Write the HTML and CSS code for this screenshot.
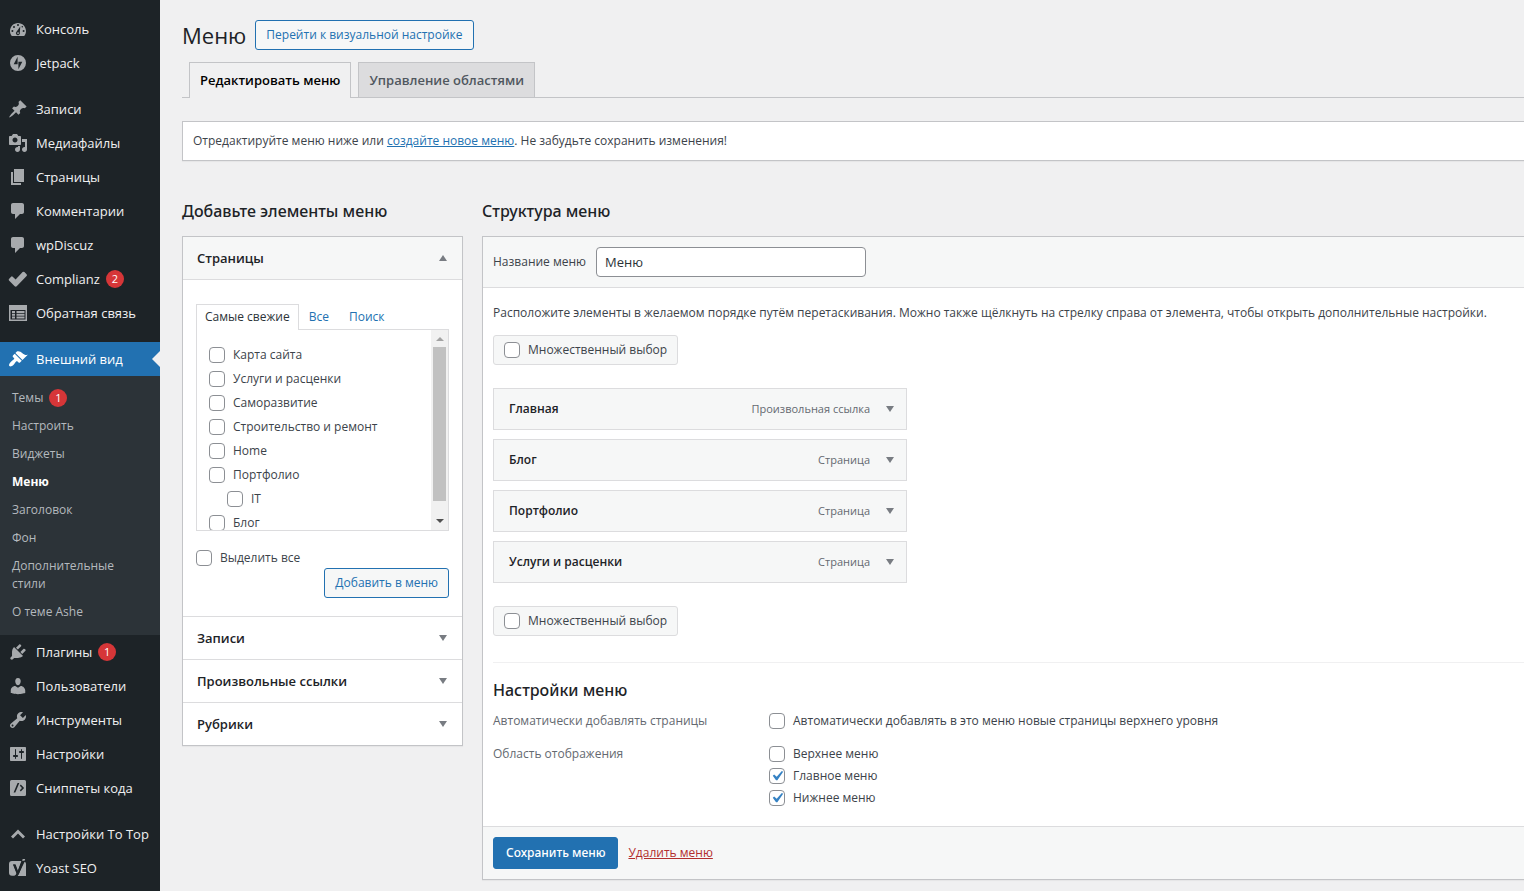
FILE: index.html
```html
<!DOCTYPE html>
<html lang="ru">
<head>
<meta charset="utf-8">
<meta name="viewport" content="width=device-width, initial-scale=1">
<title>Меню</title>
<link rel="stylesheet" href="styles.css">
</head>
<body>
<div class="layout">
  <nav class="sidebar" aria-label="Главное меню">
    <ul class="nav">
      <li><a class="nav-link" href="#"><svg class="icon" viewBox="0 0 20 20"><path fill-rule="evenodd" d="M3.8 17h12.400C17.300 15.600 18 13.900 18 12c0-4.400-3.600-8-8-8s-8 3.600-8 8c0 1.900.7 3.600 1.800 5zM9 6a1 1 0 1 1 2 0 1 1 0 0 1-2 0zM5 8a1 1 0 1 1 2 0 1 1 0 0 1-2 0zM13.500 7.700a.8.8 0 1 1 1.600 0 .8.8 0 0 1-1.600 0zM3.400 12a1 1 0 1 1 2 0 1 1 0 0 1-2 0zM14.600 12a1 1 0 1 1 2 0 1 1 0 0 1-2 0zM12.300 7.400L11.800 13.500a2 2 0 1 1-3.300-.8zM10 13.200a.9.9 0 1 0 .1 0z"/></svg>Консоль</a></li>
      <li><a class="nav-link" href="#"><svg class="icon" viewBox="0 0 20 20"><path fill-rule="evenodd" d="M10 2a8 8 0 1 0 0 16 8 8 0 0 0 0-16zM9.600 11.300H5.700l3.900-7.600zM10.400 16.300V8.700h3.900z"/></svg>Jetpack</a></li>
      <li class="nav-gap"><a class="nav-link" href="#"><svg class="icon" viewBox="0 0 20 20"><path d="M10.440 3.020l1.820-1.820 6.360 6.350-1.830 1.820c-1.050-.68-2.480-.57-3.410.36l-.75.75c-.92.93-1.040 2.350-.35 3.410l-1.830 1.820-2.410-2.410-2.800 2.790c-.42.42-3.380 2.710-3.800 2.290s1.860-3.390 2.280-3.810l2.790-2.790L4.100 9.360l1.830-1.820c1.050.69 2.480.57 3.400-.36l.75-.75c.93-.92 1.050-2.350.36-3.410z"/></svg>Записи</a></li>
      <li><a class="nav-link" href="#"><svg class="icon" viewBox="0 0 20 20"><path fill-rule="evenodd" d="M13 11V4c0-.55-.45-1-1-1h-1.670L9 1H5L3.670 3H2c-.55 0-1 .45-1 1v7c0 .55.45 1 1 1h10c.55 0 1-.45 1-1zM7 4.500c1.380 0 2.500 1.120 2.500 2.500S8.380 9.500 7 9.500 4.500 8.380 4.500 7 5.620 4.500 7 4.500zM14 6h5v10.500c0 1.380-1.120 2.500-2.500 2.500S14 17.880 14 16.500s1.120-2.500 2.500-2.500c.17 0 .34.020.5.050V9h-3V6zm-4 8.050V13h2v3.500c0 1.380-1.120 2.500-2.500 2.500S7 17.880 7 16.500 8.120 14 9.500 14c.17 0 .34.020.5.050z"/></svg>Медиафайлы</a></li>
      <li><a class="nav-link" href="#"><svg class="icon" viewBox="0 0 20 20"><path d="M6 15V2h10v13H6zm-1 1h8v2H3V5h2v11z"/></svg>Страницы</a></li>
      <li><a class="nav-link" href="#"><svg class="icon" viewBox="0 0 20 20"><path d="M5 2h9c1.100 0 2 .9 2 2v7c0 1.100-.9 2-2 2h-2l-5 5v-5H5c-1.100 0-2-.9-2-2V4c0-1.100.9-2 2-2z"/></svg>Комментарии</a></li>
      <li><a class="nav-link" href="#"><svg class="icon" viewBox="0 0 20 20"><path d="M5 2h9c1.100 0 2 .9 2 2v7c0 1.100-.9 2-2 2h-2l-5 5v-5H5c-1.100 0-2-.9-2-2V4c0-1.100.9-2 2-2z"/></svg>wpDiscuz</a></li>
      <li><a class="nav-link" href="#"><svg class="icon" viewBox="0 0 20 20"><path d="M1 9.900l2.100-2.200q.8-.7 1.600 0l2.900 2.700 7-7.300q.9-.8 1.800 0l2.200 2.100q.8.900 0 1.800L8.700 17.300q-1 .8-2 0L1 11.600q-.7-.9 0-1.700z"/></svg>Complianz<span class="badge">2</span></a></li>
      <li><a class="nav-link" href="#"><svg class="icon" viewBox="0 0 20 20"><path fill-rule="evenodd" d="M1 2h18v16H1zM2.500 7v9.500h15V7zM4 8h3v2H4zM8.500 8h8v2h-8zM4 10.800h3v2H4zM8.500 10.800h8v2h-8zM4 13.600h3v2H4zM8.500 13.600h8v2h-8z"/></svg>Обратная связь</a></li>
      <li class="nav-gap">
        <a class="nav-link nav-link-current" href="#"><svg class="icon" viewBox="0 0 20 20"><path d="M14.480 11.060L7.410 3.990l1.500-1.500c.5-.56 2.300-.47 3.510.32 1.210.8 1.430 1.280 2.910 2.100 1.180.64 2.450 1.260 4.450.85zm-.71.71L6.700 4.700 4.930 6.470c-.39.39-.39 1.020 0 1.410l1.060 1.060c.39.39.39 1.030 0 1.420-.6.6-1.430 1.110-2.210 1.690-.35.26-.7.53-1.010.84C1.430 14.230.4 16.080 1.400 17.070c.99 1 2.840-.03 4.180-1.360.31-.31.58-.66.85-1.020.57-.78 1.080-1.610 1.690-2.210.39-.39 1.020-.39 1.410 0l1.060 1.060c.39.39 1.020.39 1.410 0z"/></svg>Внешний вид</a>
        <ul class="subnav">
          <li><a href="#">Темы<span class="badge">1</span></a></li>
          <li><a href="#">Настроить</a></li>
          <li><a href="#">Виджеты</a></li>
          <li><a class="subnav-current" href="#">Меню</a></li>
          <li><a href="#">Заголовок</a></li>
          <li><a href="#">Фон</a></li>
          <li><a href="#">Дополнительные<br>стили</a></li>
          <li><a href="#">О теме Ashe</a></li>
        </ul>
      </li>
      <li><a class="nav-link" href="#"><svg class="icon" viewBox="0 0 20 20"><path d="M13.110 4.360L9.870 7.600 8 5.730l3.240-3.240c.35-.34 1.050-.2 1.560.32.52.51.66 1.210.31 1.550zm-8 1.770l.91-1.120 9.010 9.010-1.190.84c-.71.71-2.630 1.160-3.820 1.160H6.140L4.900 17.260c-.59.59-1.540.59-2.120 0-.59-.58-.59-1.530 0-2.120l1.240-1.240v-3.880c0-1.130.4-3.190 1.090-3.890zm7.260 3.970l3.240-3.240c.34-.35 1.040-.21 1.550.31.52.51.66 1.210.31 1.550l-3.240 3.250z"/></svg>Плагины<span class="badge">1</span></a></li>
      <li><a class="nav-link" href="#"><svg class="icon" viewBox="0 0 20 20"><path d="M10 9.250c-2.270 0-2.730-3.440-2.730-3.440C7 4.020 7.820 2 9.970 2c2.160 0 2.980 2.020 2.710 3.810 0 0-.41 3.440-2.680 3.440zm0 2.570L12.720 10c2.390 0 4.520 2.330 4.520 4.530v2.490s-3.650 1.130-7.240 1.130c-3.650 0-7.240-1.130-7.240-1.130v-2.490c0-2.250 1.940-4.480 4.470-4.480z"/></svg>Пользователи</a></li>
      <li><a class="nav-link" href="#"><svg class="icon" viewBox="0 0 20 20"><path fill-rule="evenodd" d="M16.680 9.770c-1.340 1.340-3.300 1.670-4.950.99l-5.410 6.520c-.99.99-2.590.99-3.580 0s-.99-2.590 0-3.570l6.520-5.420c-.68-1.650-.35-3.610.99-4.950 1.280-1.280 3.120-1.620 4.720-1.060l-2.890 2.890 2.820 2.820 2.860-2.870c.53 1.580.18 3.390-1.080 4.650zM3.810 16.210c.4.39 1.040.39 1.430 0 .4-.4.4-1.040 0-1.430-.39-.4-1.030-.4-1.430 0-.39.39-.39 1.030 0 1.430z"/></svg>Инструменты</a></li>
      <li><a class="nav-link" href="#"><svg class="icon" viewBox="0 0 20 20"><path fill-rule="evenodd" d="M18 16V4c0-.55-.45-1-1-1H3c-.55 0-1 .45-1 1v12c0 .55.45 1 1 1h14c.55 0 1-.45 1-1zM8 11h1c.55 0 1 .45 1 1s-.45 1-1 1H8v1.500c0 .28-.22.5-.5.5s-.5-.22-.5-.5V13H6c-.55 0-1-.45-1-1s.45-1 1-1h1V5.500c0-.28.22-.5.5-.5s.5.22.5.5V11zm5-2h-1c-.55 0-1-.45-1-1s.45-1 1-1h1V5.500c0-.28.22-.5.5-.5s.5.22.5.5V7h1c.55 0 1 .45 1 1s-.45 1-1 1h-1v5.500c0 .28-.22.5-.5.5s-.5-.22-.5-.5V9z"/></svg>Настройки</a></li>
      <li><a class="nav-link" href="#"><svg class="icon" viewBox="0 0 20 20"><path fill-rule="evenodd" d="M3.500 2h13A1.500 1.500 0 0 1 18 3.500v13a1.500 1.500 0 0 1-1.500 1.500h-13A1.500 1.500 0 0 1 2 16.500v-13A1.500 1.500 0 0 1 3.500 2zM9.600 5l-4 9.500h1.700l4-9.500zM11.800 7.700l2.200 2.300-2.200 2.300 1 1.200 3.300-3.500-3.300-3.500z"/></svg>Сниппеты кода</a></li>
      <li class="nav-gap"><a class="nav-link" href="#"><svg class="icon" viewBox="0 0 20 20"><path d="M10 5.500l7 7-2 2-5-5-5 5-2-2z"/></svg>Настройки To Top</a></li>
      <li><a class="nav-link" href="#"><svg class="icon" viewBox="0 0 20 20"><path d="M4 3h9.800L9.900 13 7.600 6.500H5l3.500 8.700c-.5 1.700-1.400 2.600-2.800 2.600H4a3 3 0 0 1-3-3V6a3 3 0 0 1 3-3zM16.600 3.800C17.800 4.300 18 5.200 18 6.200V18H8.700c1.300-.7 2.100-2 2.800-3.800z"/><path d="M14.200 1h2.600L11 15.800C10 18.300 8.600 19.400 6 19.500v-1.600c1.400-.2 2.100-.9 2.700-2.500L5.200 6.600h2L9.700 13z" class="icon-dark"/><path d="M14.700 1h2.500l-.7 1.700h-2.400z"/></svg>Yoast SEO</a></li>
    </ul>
  </nav>

  <main class="main">
    <header class="page-head">
      <h1>Меню</h1>
      <a class="button" href="#">Перейти к визуальной настройке</a>
    </header>
    <nav class="tabs" aria-label="Разделы">
      <a class="tab tab-active" href="#">Редактировать меню</a>
      <a class="tab" href="#">Управление областями</a>
    </nav>
    <p class="notice">Отредактируйте меню ниже или <a href="#">создайте новое меню</a>. Не забудьте сохранить изменения!</p>

    <div class="columns">
      <section class="items">
        <h2>Добавьте элементы меню</h2>
        <div class="accordion">
          <button class="acc-head acc-head-open" type="button" aria-expanded="true">Страницы<svg class="arrow" viewBox="0 0 8 6"><path d="M0 6L4 0l4 6z"/></svg></button>
          <div class="acc-body">
            <div class="subtabs">
              <a class="subtab subtab-active" href="#">Самые свежие</a>
              <a class="subtab" href="#">Все</a>
              <a class="subtab" href="#">Поиск</a>
            </div>
            <div class="picker">
              <ul class="picker-list">
                <li><label class="check"><input type="checkbox">Карта сайта</label></li>
                <li><label class="check"><input type="checkbox">Услуги и расценки</label></li>
                <li><label class="check"><input type="checkbox">Саморазвитие</label></li>
                <li><label class="check"><input type="checkbox">Строительство и ремонт</label></li>
                <li><label class="check"><input type="checkbox">Home</label></li>
                <li><label class="check"><input type="checkbox">Портфолио</label></li>
                <li class="picker-child"><label class="check"><input type="checkbox">IT</label></li>
                <li><label class="check"><input type="checkbox">Блог</label></li>
              </ul>
              <div class="scrollbar" aria-hidden="true">
                <svg class="scroll-arrow scroll-arrow-off" viewBox="0 0 17 17"><path d="M5 11l4-4 4 4z"/></svg>
                <div class="scroll-thumb"></div>
                <svg class="scroll-arrow" viewBox="0 0 17 17"><path d="M5 6h8l-4 4z"/></svg>
              </div>
            </div>
            <label class="check"><input type="checkbox">Выделить все</label>
            <div class="acc-actions"><button class="button" type="button">Добавить в меню</button></div>
          </div>
          <button class="acc-head" type="button" aria-expanded="false">Записи<svg class="arrow" viewBox="0 0 8 6"><path d="M0 0h8L4 6z"/></svg></button>
          <button class="acc-head" type="button" aria-expanded="false">Произвольные ссылки<svg class="arrow" viewBox="0 0 8 6"><path d="M0 0h8L4 6z"/></svg></button>
          <button class="acc-head" type="button" aria-expanded="false">Рубрики<svg class="arrow" viewBox="0 0 8 6"><path d="M0 0h8L4 6z"/></svg></button>
        </div>
      </section>

      <section class="structure">
        <h2>Структура меню</h2>
        <form class="panel">
          <div class="panel-head">
            <label for="menu-name">Название меню</label>
            <input class="text-input" id="menu-name" type="text" value="Меню">
          </div>
          <div class="panel-body">
            <p class="hint">Расположите элементы в желаемом порядке путём перетаскивания. Можно также щёлкнуть на стрелку справа от элемента, чтобы открыть дополнительные настройки.</p>
            <label class="check bulk"><input type="checkbox">Множественный выбор</label>
            <ul class="menu-items">
              <li class="menu-item"><span class="item-title">Главная</span><span class="item-type">Произвольная ссылка</span><svg class="arrow" viewBox="0 0 8 6"><path d="M0 0h8L4 6z"/></svg></li>
              <li class="menu-item"><span class="item-title">Блог</span><span class="item-type">Страница</span><svg class="arrow" viewBox="0 0 8 6"><path d="M0 0h8L4 6z"/></svg></li>
              <li class="menu-item"><span class="item-title">Портфолио</span><span class="item-type">Страница</span><svg class="arrow" viewBox="0 0 8 6"><path d="M0 0h8L4 6z"/></svg></li>
              <li class="menu-item"><span class="item-title">Услуги и расценки</span><span class="item-type">Страница</span><svg class="arrow" viewBox="0 0 8 6"><path d="M0 0h8L4 6z"/></svg></li>
            </ul>
            <label class="check bulk"><input type="checkbox">Множественный выбор</label>
            <div class="settings">
              <h3>Настройки меню</h3>
              <div class="setting" role="group" aria-labelledby="auto-add">
                <span class="setting-name" id="auto-add">Автоматически добавлять страницы</span>
                <div class="setting-options">
                  <label class="check"><input type="checkbox">Автоматически добавлять в это меню новые страницы верхнего уровня</label>
                </div>
              </div>
              <div class="setting" role="group" aria-labelledby="locations">
                <span class="setting-name" id="locations">Область отображения</span>
                <div class="setting-options">
                  <label class="check"><input type="checkbox">Верхнее меню</label>
                  <label class="check"><input type="checkbox" checked>Главное меню</label>
                  <label class="check"><input type="checkbox" checked>Нижнее меню</label>
                </div>
              </div>
            </div>
          </div>
          <div class="panel-foot">
            <button class="button-primary" type="button">Сохранить меню</button>
            <a class="delete" href="#">Удалить меню</a>
          </div>
        </form>
      </section>
    </div>
  </main>
</div>
</body>
</html>
```
FILE: styles.css
```css
* { box-sizing: border-box; }

body {
  margin: 0;
  background: #f0f0f1;
  color: #3c434a;
  font: 12px/18px "Open Sans", "Noto Sans", sans-serif;
}

ul { list-style: none; margin: 0; padding: 0; }
h1, h2, h3, p { margin: 0; }
a { color: #2271b1; }
button, input { font: inherit; }

.layout { display: flex; min-height: 100vh; }

/* Sidebar */
.sidebar { flex: 0 0 160px; padding-top: 12px; background: #1d2327; }
.nav-gap { margin-top: 12px; }
.nav-link {
  display: flex;
  align-items: center;
  height: 34px;
  padding-left: 8px;
  color: #f0f0f1;
  font-size: 13px;
  text-decoration: none;
  white-space: nowrap;
}
.icon { flex: none; width: 20px; height: 20px; margin-right: 8px; fill: #a7aaad; }
.icon-dark { fill: #1d2327; }
.nav-link-current { position: relative; background: #2271b1; color: #fff; }
.nav-link-current .icon { fill: #fff; }
.nav-link-current::after {
  content: "";
  position: absolute;
  top: 9px;
  right: 0;
  border: 8px solid transparent;
  border-left: 0;
  border-right-color: #f0f0f1;
}
.badge {
  display: inline-block;
  min-width: 18px;
  height: 18px;
  margin-left: 6px;
  border-radius: 9px;
  background: #d63638;
  color: #fff;
  font-size: 11px;
  line-height: 18px;
  text-align: center;
}
.subnav { padding: 8px 0 9px; background: #2c3338; }
.subnav a { display: block; padding: 5px 12px; color: #b4b9be; text-decoration: none; }
.subnav .badge { vertical-align: top; }
.subnav .subnav-current { color: #fff; font-weight: 700; }

/* Page header */
.main { flex: 1; min-width: 0; padding: 20px 0 10px 22px; }
.page-head { display: flex; align-items: center; gap: 9px; }
h1 { color: #1d2327; font-size: 22px; font-weight: 400; line-height: 30px; }
.button {
  display: inline-block;
  height: 30px;
  padding: 0 10px;
  border: 1px solid #2271b1;
  border-radius: 3px;
  background: #f6f7f7;
  color: #2271b1;
  line-height: 28px;
  text-decoration: none;
}
.tabs { display: flex; gap: 7px; margin-top: 12px; padding-left: 7px; border-bottom: 1px solid #c3c4c7; }
.tab {
  height: 35px;
  padding: 0 10px;
  border: 1px solid #c3c4c7;
  border-bottom: 0;
  background: #dcdcde;
  color: #50575e;
  font-size: 13px;
  font-weight: 600;
  line-height: 34px;
  text-decoration: none;
}
.tab-active { height: 36px; margin-bottom: -1px; background: #f0f0f1; color: #000; }
.notice {
  margin-top: 23px;
  padding: 10px;
  border: 1px solid #c3c4c7;
  border-right: 0;
  background: #fff;
  box-shadow: 0 1px 1px rgba(0, 0, 0, 0.04);
}

/* Columns */
.columns { display: grid; grid-template-columns: 281px minmax(0, 1fr); gap: 19px; margin-top: 39px; }
h2, h3 { color: #1d2327; font: 500 16px/22px "Noto Sans", sans-serif; }
h2 { margin-bottom: 14px; }

.check { display: flex; align-items: center; gap: 8px; min-height: 20px; }
.check input {
  appearance: none;
  flex: none;
  width: 16px;
  height: 16px;
  margin: 0;
  border: 1px solid #8c8f94;
  border-radius: 4px;
  background: #fff;
}
.check input:checked {
  background: #fff url("data:image/svg+xml;utf8,<svg xmlns='http://www.w3.org/2000/svg' viewBox='0 0 20 20'><path d='M14.830 4.890l1.340.94-5.810 8.380H9.020L5.780 9.670l1.340-1.250 2.570 2.400z' fill='%233582c4'/></svg>") center / 20px 20px no-repeat;
}
.arrow { flex: none; width: 8px; height: 6px; fill: #787c82; }

/* Accordion */
.accordion { border: 1px solid #c3c4c7; background: #fff; box-shadow: 0 1px 1px rgba(0, 0, 0, 0.04); }
.acc-head {
  display: flex;
  align-items: center;
  justify-content: space-between;
  width: 100%;
  height: 43px;
  padding: 0 15px 0 14px;
  border: 0;
  border-top: 1px solid #dcdcde;
  background: #fff;
  color: #1d2327;
  font-size: 13px;
  font-weight: 600;
  text-align: left;
}
.acc-head-open { border-top: 0; border-bottom: 1px solid #dcdcde; background: #f6f7f7; }
.acc-body { padding: 24px 13px 18px; }
.subtabs { display: flex; }
.subtab { height: 26px; padding: 0 9px; border: 1px solid transparent; border-bottom: 0; line-height: 24px; text-decoration: none; }
.subtab-active { position: relative; z-index: 1; padding: 0 8px; border-color: #dcdcde; background: #fff; color: #2c3338; }
.picker {
  display: flex;
  height: 202px;
  margin: -1px 0 17px;
  border: 1px solid #dcdcde;
  overflow: hidden;
}
.picker-list { flex: 1; padding: 13px 12px 0; }
.picker-list .check { height: 24px; }
.picker-child { padding-left: 18px; }
.scrollbar { display: flex; flex-direction: column; width: 17px; background: #f1f1f1; }
.scroll-arrow { width: 17px; height: 17px; fill: #505050; }
.scroll-arrow-off { fill: #a3a3a3; }
.scroll-thumb { height: 154px; margin: 0 2px 12px; background: #c1c1c1; }
.acc-actions { display: flex; justify-content: flex-end; }

/* Menu structure */
.panel { border: 1px solid #c3c4c7; border-right: 0; background: #fff; box-shadow: 0 1px 1px rgba(0, 0, 0, 0.04); }
.panel-head, .panel-foot { display: flex; align-items: center; gap: 10px; padding: 10px; background: #f6f7f7; }
.panel-head { border-bottom: 1px solid #dcdcde; }
.panel-foot { border-top: 1px solid #dcdcde; }
.text-input {
  width: 270px;
  height: 30px;
  padding: 0 8px;
  border: 1px solid #8c8f94;
  border-radius: 4px;
  background: #fff;
  color: #2c3338;
  font-size: 13px;
}
.panel-body { padding: 16px 0 17px 10px; }
.hint { margin-bottom: 13px; }
.bulk {
  width: max-content;
  height: 30px;
  padding: 0 10px;
  border: 1px solid #dcdcde;
  border-radius: 3px;
  background: #f6f7f7;
}
.menu-items { display: grid; gap: 9px; max-width: 414px; margin: 23px 0; }
.menu-item {
  display: flex;
  align-items: center;
  height: 42px;
  padding: 0 12px 0 15px;
  border: 1px solid #dcdcde;
  background: #f6f7f7;
}
.item-title { flex: 1; color: #1d2327; font-weight: 600; }
.item-type { margin-right: 16px; color: #646970; font-size: 11px; }
.settings { margin-top: 26px; padding-top: 16px; border-top: 1px solid #f0f0f1; }
.setting { display: grid; grid-template-columns: 276px minmax(0, 1fr); margin-top: 9px; }
.setting + .setting { margin-top: 11px; }
.setting-name { line-height: 22px; color: #646970; }
.setting-options .check { height: 22px; }
.button-primary {
  height: 32px;
  padding: 0 12px;
  border: 1px solid #2271b1;
  border-radius: 3px;
  background: #2271b1;
  color: #fff;
  font-family: "Noto Sans", sans-serif;
  font-weight: 500;
}
.delete { color: #b32d2e; }
```
